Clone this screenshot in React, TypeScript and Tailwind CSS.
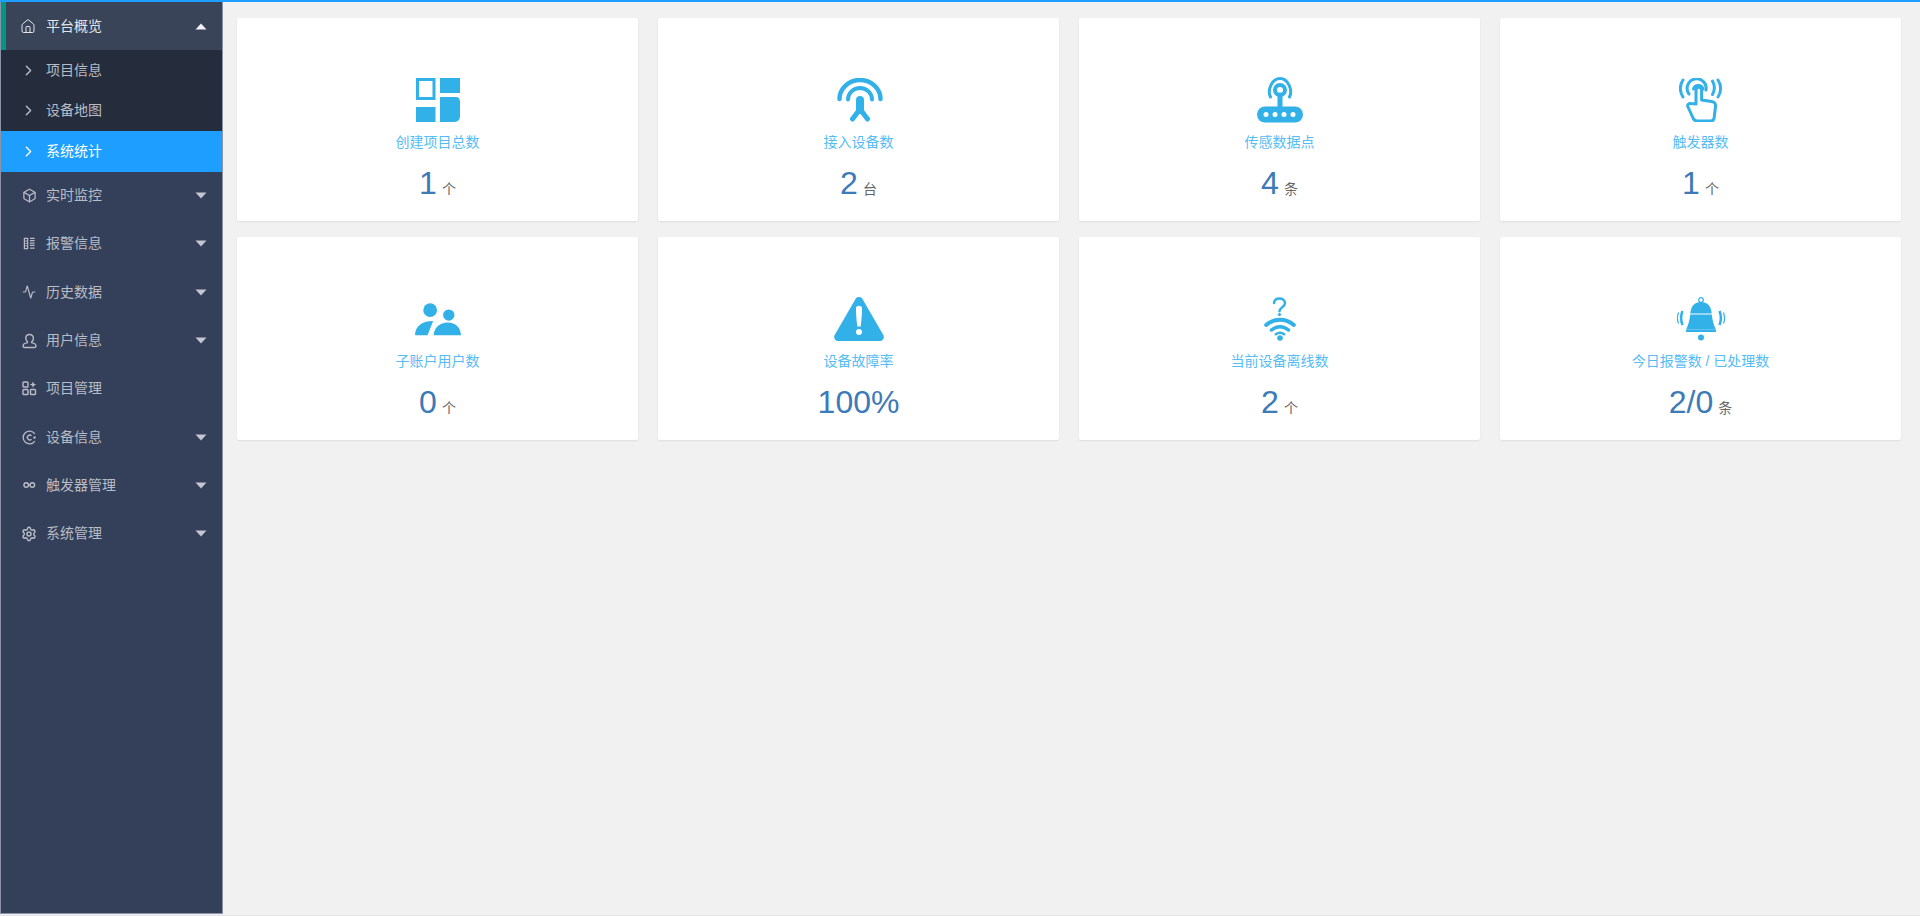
import { Activity, Box, ChevronRight, House, Settings } from "lucide-react"
import type { ReactNode } from "react"

const blue = "#32b0e8"

function Caret({ up }: { up?: boolean }) {
  return (
    <svg width="12" height="7" viewBox="0 0 12 7" className="ml-auto mr-[15px] shrink-0">
      <path d={up ? "M6 0.5 L11.5 6.5 H0.5 Z" : "M0.5 0.5 H11.5 L6 6.5 Z"} fill={up ? "#f2f3f5" : "#c3c7d0"} />
    </svg>
  )
}

// small menu icons that lucide has no close match for
const AlarmIcon = (
  <svg width="13" height="13" viewBox="0 0 14 14" fill="none" stroke="currentColor" strokeWidth="1.3">
    <path d="M1.5 1.5h3.5v11H1.5z" />
    <path d="M7.5 1.500h5M7.500 4h5M7.500 6.500h5M7.500 9h5M7.500 12h5" />
    <path d="M2.500 4.500h1.500M2.500 7h1.500M2.500 9.500h1.500" />
  </svg>
)
const UserIcon = (
  <svg width="16" height="16" viewBox="0 0 16 16" fill="none" stroke="currentColor" strokeWidth="1.4">
    <path d="M8.500 1.500c-2.400 0-3.700 1.700-3.700 3.800 0 1.500.7 2.700 1.600 3.400v.9c-2.200.5-4.400 1.600-4.400 3.300 0 1 .7 1.600 1.800 1.600h9.400c1.100 0 1.800-.6 1.800-1.600 0-1.700-2.200-2.800-4.300-3.300v-.9c1-.7 1.700-1.900 1.700-3.400 0-2.100-1.500-3.800-3.900-3.800z" />
  </svg>
)
const ProjectIcon = (
  <svg width="15" height="15" viewBox="0 0 15 15" fill="none" stroke="currentColor" strokeWidth="1.4">
    <rect x="1" y="1" width="5" height="5" rx="0.8" />
    <rect x="1" y="8.500" width="5" height="5" rx="0.8" />
    <rect x="8.500" y="8.500" width="5" height="5" rx="0.8" />
    <path d="M11 .5 L12 2.700 14.300 3.500 12 4.500 11 6.700 10 4.500 7.800 3.500 10 2.700Z" fill="currentColor" stroke="none" />
  </svg>
)
const DeviceIcon = (
  <svg width="15" height="15" viewBox="0 0 15 15" fill="none" stroke="currentColor" strokeWidth="1.3">
    <path d="M12.800 3.800A6.400 6.400 0 1 0 12.800 11.200" />
    <path d="M9.500 5.800a2.400 2.400 0 1 0 0 3.400" />
    <circle cx="12.500" cy="7.500" r="1.200" fill="currentColor" stroke="none" />
  </svg>
)
const TriggerIcon = (
  <svg width="13" height="8" viewBox="0 0 15 9" fill="none" stroke="currentColor" strokeWidth="1.600">
    <circle cx="3.700" cy="4.500" r="2.600" />
    <circle cx="10.800" cy="4.500" r="2.600" />
    <path d="M6.300 4.500h2" />
  </svg>
)

type MenuItem = { label: string; icon: ReactNode; caret?: boolean }

const menu: MenuItem[] = [
  { label: "实时监控", icon: <Box size={15} strokeWidth={2} />, caret: true },
  { label: "报警信息", icon: AlarmIcon, caret: true },
  { label: "历史数据", icon: <Activity size={14} strokeWidth={2} />, caret: true },
  { label: "用户信息", icon: UserIcon, caret: true },
  { label: "项目管理", icon: ProjectIcon },
  { label: "设备信息", icon: DeviceIcon, caret: true },
  { label: "触发器管理", icon: TriggerIcon, caret: true },
  { label: "系统管理", icon: <Settings size={16} strokeWidth={2.2} />, caret: true },
]

const sub = ["项目信息", "设备地图", "系统统计"]

function Sidebar() {
  return (
    <aside className="w-[223px] shrink-0 bg-[#344059] border-l border-r border-b border-[#8a93a8] text-[14px] text-[#b8bcc6]">
      <div className="h-[48px] flex items-center bg-[#394459] border-l-[5px] border-[#009688] text-[#e4e6ea]">
        <span className="w-[16px] ml-[14px] mr-[10px] flex justify-center"><House size={17} strokeWidth={1.5} /></span>
        平台概览
        <Caret up />
      </div>
      <div className="bg-[#252d3d]">
        {sub.map((s, i) => (
          <div key={s} className={`h-[40.500px] flex items-center pl-[19px] ${i === 2 ? "bg-[#1e9fff] text-white" : ""}`}>
            <ChevronRight size={17} strokeWidth={2} className="mr-[9px]" />
            {s}
          </div>
        ))}
      </div>
      {menu.map((m) => (
        <div key={m.label} className="h-[48.300px] flex items-center">
          <span className="w-[16px] ml-[20px] mr-[9px] flex justify-center">{m.icon}</span>
          {m.label}
          {m.caret && <Caret />}
        </div>
      ))}
    </aside>
  )
}

// stat card icons, all drawn in the same blue
const icons: Record<string, ReactNode> = {
  project: (
    <svg width="44" height="44" viewBox="0 0 44 44" fill={blue}>
      <path fillRule="evenodd" d="M0 0h19.500v22H0zM3 3v16h13.500V3z" />
      <rect x="24" y="0" width="20" height="15" />
      <path d="M24 19h16c2.500 0 4 1.800 4 4.500V38c0 3-2 6-5.500 6H24z" />
      <rect x="0" y="29" width="19.500" height="15" />
    </svg>
  ),
  antenna: (
    <svg width="46" height="44" viewBox="0 0 46 44" fill="none" stroke={blue} strokeLinecap="round" className="translate-x-px">
      <path d="M2.500 21a20.500 19 0 0 1 41 0" strokeWidth="4.500" />
      <path d="M11 21.500a12 11.500 0 0 1 24 0" strokeWidth="4" />
      <path d="M23 22v10" strokeWidth="8" />
      <path d="M23 31l-7.500 10M23 31l7.500 10" strokeWidth="5" />
    </svg>
  ),
  router: (
    <svg width="54" height="46" viewBox="0 0 54 46" fill="none" stroke={blue} strokeLinecap="round">
      <path d="M17.500 20c-3.500-7 1.500-18.500 9.500-18.500S40 13 36.500 20" strokeWidth="3" />
      <circle cx="27" cy="13" r="5" strokeWidth="4" />
      <path d="M27 18v15" strokeWidth="5" />
      <rect x="4" y="29.500" width="46" height="16" rx="8" fill={blue} stroke="none" />
      <g fill="#fff" stroke="none">
        <circle cx="13" cy="37.500" r="2.500" />
        <circle cx="22" cy="37.500" r="2.500" />
        <circle cx="31" cy="37.500" r="2.500" />
        <circle cx="40" cy="37.500" r="2.500" />
      </g>
    </svg>
  ),
  touch: (
    <svg width="44" height="44" viewBox="0 0 44 44" fill="none" stroke={blue} strokeWidth="3" strokeLinecap="round" strokeLinejoin="round">
      <path d="M4 2c-3.500 5-3.500 12 0 17M39 2c3.500 5 3.500 12 0 17M33.500 3c2.500 4.500 2.500 9 0 13.500" />
      <path d="M10 16a9.500 9.500 0 1 1 17-4" />
      <path d="M14.500 11a5 5 0 0 1 9.500 0" />
      <path d="M17 26V12a2.800 2.800 0 0 1 5.600 0v10l10 1.500c2.500.4 4 2 4 4.500l-1.500 12c-.3 2-1.500 3-3.500 3H18c-1.500 0-2.500-.7-3.500-2L9 29c-1-2 .5-4 2.500-3.500z" />
    </svg>
  ),
  users: (
    <svg width="46" height="33" viewBox="0 0 47 33" fill={blue}>
      <circle cx="15.500" cy="7" r="7" />
      <circle cx="34.500" cy="12" r="5.800" />
      <path d="M0 32c.5-8 6-14 18.500-14L13 32c0 .5-.3.500-1 .5H1c-.6 0-1-.2-1-.5z" />
      <path d="M19 32.500c.5-8 6.500-13 14.500-13S46.500 24.500 47 32.500z" />
    </svg>
  ),
  warning: (
    <svg width="50" height="44" viewBox="0 0 50 44" fill={blue}>
      <path fillRule="evenodd" d="M21.500 2c1.500-2.700 5.500-2.700 7 0l20.800 36c1.500 2.700-.3 6-3.500 6H4.200c-3.200 0-5-3.300-3.500-6zM22 11c-.2 5 .7 14 1.300 18.500h3.400C27.300 25 28.200 16 28 11c-.2-3-5.800-3-6 0zM25 32a3 3 0 1 0 0 6 3 3 0 0 0 0-6z" />
    </svg>
  ),
  offline: (
    <svg width="32" height="44" viewBox="0 0 32 44" fill="none" stroke={blue} strokeLinecap="round">
      <path d="M10 6c.3-2.800 2.700-4.500 5.500-4.500s5.500 1.500 5.500 4.800c0 3.700-5.500 4-5.500 8" strokeWidth="2.500" />
      <circle cx="15.500" cy="17.500" r="1.600" fill={blue} stroke="none" />
      <path d="M2.200 28c7.800-7 19.800-7 27.600 0" strokeWidth="4" />
      <path d="M7.500 33c5-4.500 12-4.500 17 0" strokeWidth="3.500" />
      <path d="M11.800 37.300c2.500-1.800 5.900-1.800 8.400 0" strokeWidth="2.500" />
      <circle cx="16" cy="41" r="2.800" fill={blue} stroke="none" />
    </svg>
  ),
  bell: (
    <svg width="50" height="44" viewBox="0 0 50 44" fill={blue}>
      <circle cx="25" cy="3" r="2.300" fill="none" stroke={blue} strokeWidth="1.200" />
      <path d="M25 5c6 0 10 3.500 10.700 11.500H14.300C15 8.500 19 5 25 5z" />
      <path d="M14.200 17.500h21.600c.5 6 2 10 4 15H10.200c2-5 3.500-9 4-15z" />
      <rect x="10" y="32.500" width="30" height="2.500" />
      <circle cx="25" cy="40.500" r="3" />
      <path d="M6.500 14c-1.800 4.500-1.800 9.500 0 14M43.500 14c1.800 4.500 1.800 9.500 0 14" fill="none" stroke={blue} strokeWidth="2.500" />
      <path d="M2.500 15.500c-1.200 3.500-1.200 8 0 11M47.500 15.500c1.200 3.500 1.200 8 0 11" fill="none" stroke={blue} strokeWidth="1.200" />
    </svg>
  ),
}

const cards = [
  { icon: "project", label: "创建项目总数", value: "1", unit: "个" },
  { icon: "antenna", label: "接入设备数", value: "2", unit: "台" },
  { icon: "router", label: "传感数据点", value: "4", unit: "条" },
  { icon: "touch", label: "触发器数", value: "1", unit: "个" },
  { icon: "users", label: "子账户用户数", value: "0", unit: "个" },
  { icon: "warning", label: "设备故障率", value: "100%" },
  { icon: "offline", label: "当前设备离线数", value: "2", unit: "个" },
  { icon: "bell", label: "今日报警数 / 已处理数", value: "2/0", unit: "条" },
]

export default function App() {
  return (
    <div className="h-[916px] flex flex-col bg-[#f1f1f1] border-b border-[#e4e4e4] font-['Liberation_Sans','Noto_Sans_CJK_SC',sans-serif] overflow-hidden">
      <div className="h-[2px] shrink-0 bg-[#1e9fff]" />
      <div className="flex flex-1 pb-[1px]">
        <Sidebar />
        <main className="flex-1 pl-[14px] pr-[19px] pt-[16px]">
          <div className="grid grid-cols-4 gap-x-[20px] gap-y-[16px]">
            {cards.map((c) => (
              <div key={c.label} className="h-[203px] bg-white rounded-[2px] shadow-[0_1px_2px_rgba(0,0,0,0.08)] flex flex-col items-center pt-[59px]">
                <div className="h-[46px] flex items-center justify-center">{icons[c.icon]}</div>
                <div className="mt-[9px] h-[20px] leading-[20px] text-[14px] text-[#55bcf6]">{c.label}</div>
                <div className="mt-[11px] h-[40px] leading-[40px] flex items-baseline text-[32px] text-[#3d7ab8]">
                  {c.value}
                  {c.unit && <span className="ml-[5px] text-[14px] text-[#666666]">{c.unit}</span>}
                </div>
              </div>
            ))}
          </div>
        </main>
      </div>
    </div>
  )
}
